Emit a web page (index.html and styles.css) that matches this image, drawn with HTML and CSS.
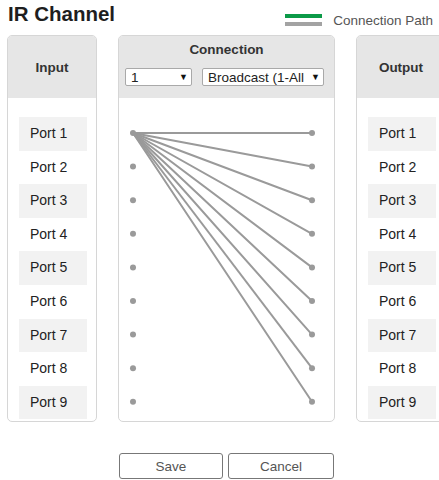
FILE: index.html
```
<!DOCTYPE html>
<html>
<head>
<meta charset="utf-8">
<title>IR Channel</title>
<link rel="stylesheet" href="styles.css">
</head>
<body>
<div class="page">

<div class="topbar">
  <div class="title">IR Channel</div>
  <div class="legend">
    <span class="legend-mark"><span class="mark-green"></span><span class="mark-gray"></span></span>
    <span class="legend-text">Connection Path</span>
  </div>
</div>

<div class="panels">
  <div class="panel side">
    <div class="panel-head">Input</div>
    <div class="panel-body">
      <div class="port odd">Port 1</div>
      <div class="port">Port 2</div>
      <div class="port odd">Port 3</div>
      <div class="port">Port 4</div>
      <div class="port odd">Port 5</div>
      <div class="port">Port 6</div>
      <div class="port odd">Port 7</div>
      <div class="port">Port 8</div>
      <div class="port odd">Port 9</div>
    </div>
  </div>

  <div class="panel middle">
    <div class="panel-head conn-head">
      <div class="conn-title">Connection</div>
      <div class="conn-controls">
        <div class="dropdown small"><span class="dd-text">1</span><span class="dd-arrow">▼</span></div>
        <div class="dropdown wide"><span class="dd-text">Broadcast (1-All)</span><span class="dd-arrow">▼</span></div>
      </div>
    </div>
    <div class="panel-body">
      <svg class="paths" width="215" height="323" viewBox="0 0 215 323">
        <g stroke="#9a9a9a" stroke-width="2" stroke-linecap="round">
          <line x1="14" y1="35" x2="193" y2="35"/>
          <line x1="14" y1="35" x2="193" y2="68.6"/>
          <line x1="14" y1="35" x2="193" y2="102.2"/>
          <line x1="14" y1="35" x2="193" y2="135.8"/>
          <line x1="14" y1="35" x2="193" y2="169.4"/>
          <line x1="14" y1="35" x2="193" y2="203"/>
          <line x1="14" y1="35" x2="193" y2="236.6"/>
          <line x1="14" y1="35" x2="193" y2="270.2"/>
          <line x1="14" y1="35" x2="193" y2="303.8"/>
        </g>
        <g fill="#9a9a9a">
          <circle cx="14" cy="35" r="3"/>
          <circle cx="14" cy="68.6" r="3"/>
          <circle cx="14" cy="102.2" r="3"/>
          <circle cx="14" cy="135.8" r="3"/>
          <circle cx="14" cy="169.4" r="3"/>
          <circle cx="14" cy="203" r="3"/>
          <circle cx="14" cy="236.6" r="3"/>
          <circle cx="14" cy="270.2" r="3"/>
          <circle cx="14" cy="303.8" r="3"/>
          <circle cx="193" cy="35" r="3"/>
          <circle cx="193" cy="68.6" r="3"/>
          <circle cx="193" cy="102.2" r="3"/>
          <circle cx="193" cy="135.8" r="3"/>
          <circle cx="193" cy="169.4" r="3"/>
          <circle cx="193" cy="203" r="3"/>
          <circle cx="193" cy="236.6" r="3"/>
          <circle cx="193" cy="270.2" r="3"/>
          <circle cx="193" cy="303.8" r="3"/>
        </g>
      </svg>
    </div>
  </div>

  <div class="panel side">
    <div class="panel-head">Output</div>
    <div class="panel-body">
      <div class="port odd">Port 1</div>
      <div class="port">Port 2</div>
      <div class="port odd">Port 3</div>
      <div class="port">Port 4</div>
      <div class="port odd">Port 5</div>
      <div class="port">Port 6</div>
      <div class="port odd">Port 7</div>
      <div class="port">Port 8</div>
      <div class="port odd">Port 9</div>
    </div>
  </div>
</div>

<div class="buttons">
  <button class="btn save">Save</button>
  <button class="btn cancel">Cancel</button>
</div>

</div>
</body>
</html>
```

FILE: styles.css
```
html, body
  {
    margin : 0;
    padding : 0;
    background-color : #FFFFFF;
    overflow : hidden;
  } /*body*/

.page
  {
    width : 439px;
    padding-left : 7px;
    font-family : "Liberation Sans", Arial, sans-serif;
    color : #222222;
  } /*.page*/

.topbar
  {
    display : flex;
    justify-content : space-between;
    height : 35px;
    padding-right : 13px;
  } /*.topbar*/
.title
  {
    font-size : 20.5px;
    font-weight : bold;
    line-height : 28px;
    margin-left : 1px;
    color : #1E1E1E;
  } /*.title*/
.legend
  {
    display : flex;
    align-items : flex-start;
    gap : 11px;
    padding-top : 13px;
  } /*.legend*/
.legend-mark
  {
    display : flex;
    flex-direction : column;
    gap : 4px;
    width : 37px;
    padding-top : 1px;
  } /*.legend-mark*/
.mark-green
  {
    height : 4px;
    background-color : #0C9A48;
  } /*.mark-green*/
.mark-gray
  {
    height : 4px;
    background-color : #A3A3A3;
  } /*.mark-gray*/
.legend-text
  {
    font-size : 13.5px;
    line-height : 16px;
    color : #555555;
  } /*.legend-text*/

.panels
  {
    display : flex;
    gap : 21px;
  } /*.panels*/
.panel
  {
    border : 1px solid #D6D6D6;
    border-radius : 5px;
    overflow : hidden;
    flex : none;
  } /*.panel*/
.panel.side
  {
    width : 88px;
  } /*.panel.side*/
.panel.middle
  {
    width : 215px;
  } /*.panel.middle*/

.panel-head
  {
    height : 62px;
    background-color : #E6E6E6;
    display : flex;
    align-items : center;
    justify-content : center;
    font-size : 13.5px;
    font-weight : bold;
    color : #333333;
  } /*.panel-head*/
.conn-head
  {
    flex-direction : column;
    justify-content : flex-start;
    padding-top : 6px;
    height : 56px;
  } /*.conn-head*/
.conn-title
  {
    line-height : 16px;
  } /*.conn-title*/
.conn-controls
  {
    display : flex;
    gap : 10px;
    width : 100%;
    padding-left : 6px;
    margin-top : 10px;
    box-sizing : border-box;
  } /*.conn-controls*/

.dropdown
  {
    display : flex;
    align-items : center;
    height : 18px;
    box-sizing : border-box;
    border : 1px solid #A9A9A9;
    border-radius : 2px;
    background-color : #FFFFFF;
    padding-left : 5px;
    font-size : 13.5px;
    font-weight : normal;
    color : #222222;
    overflow : hidden;
  } /*.dropdown*/
.dropdown.small
  {
    width : 67px;
  } /*.dropdown.small*/
.dropdown.wide
  {
    width : 122px;
  } /*.dropdown.wide*/
.dd-text
  {
    white-space : nowrap;
    overflow : hidden;
    flex : 1;
    margin-right : 4px;
  } /*.dd-text*/
.dd-arrow
  {
    flex : none;
    width : 15px;
    text-align : center;
    font-size : 9px;
    color : #111111;
  } /*.dd-arrow*/

.panel-body
  {
    height : 323px;
    box-sizing : border-box;
    padding : 19px 9px 0 11px;
  } /*.panel-body*/
.middle .panel-body
  {
    padding : 0;
  } /*.middle .panel-body*/
.paths
  {
    display : block;
  } /*.paths*/

.port
  {
    height : 33.6px;
    line-height : 33.6px;
    padding-left : 11px;
    font-size : 14px;
    color : #222222;
  } /*.port*/
.port.odd
  {
    background-color : #F2F2F2;
  } /*.port.odd*/

.buttons
  {
    display : flex;
    justify-content : center;
    gap : 5px;
    margin-top : 31px;
  } /*.buttons*/
.btn
  {
    height : 26px;
    border : 1px solid #777777;
    border-radius : 3px;
    background-color : #FFFFFF;
    font-family : "Liberation Sans", Arial, sans-serif;
    font-size : 13.5px;
    color : #555555;
    padding : 0;
  } /*.btn*/
.btn.save
  {
    width : 104px;
  } /*.btn.save*/
.btn.cancel
  {
    width : 106px;
  } /*.btn.cancel*/
```
